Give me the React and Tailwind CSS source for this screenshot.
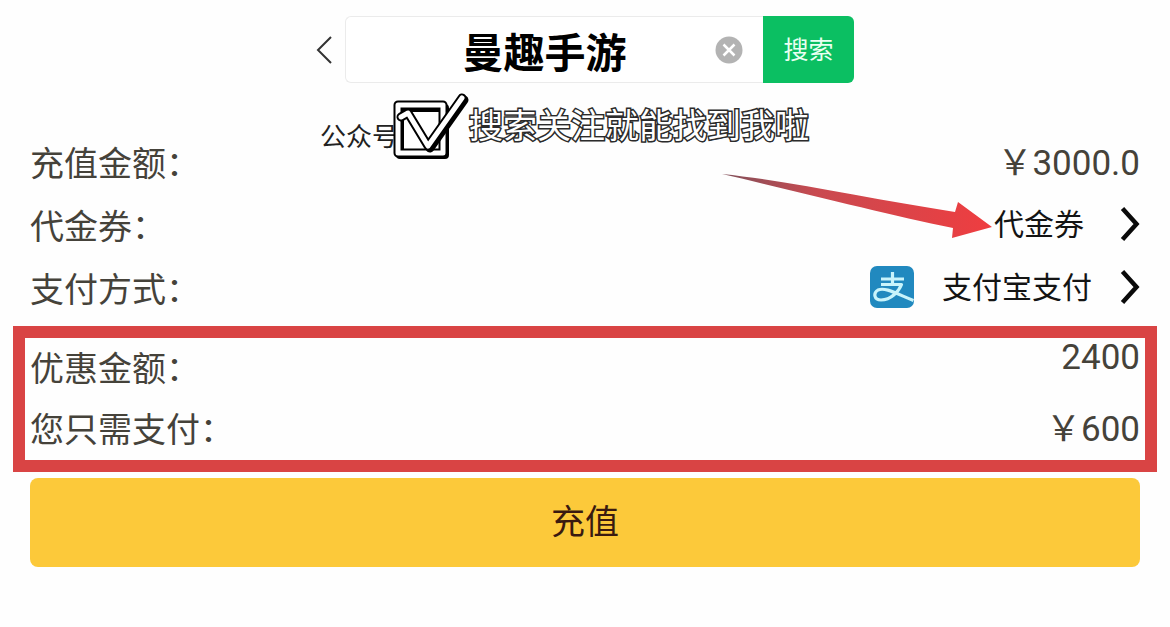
const Chevron = () => (
  <svg className="w-5 h-9" viewBox="0 0 20 36" fill="none" aria-hidden="true">
    <path d="M2.500 2.500 L16.500 18 L2.500 33.500" stroke="#0a0a0a" strokeWidth="4.5" />
  </svg>
);

const AlipayLogo = () => (
  <svg className="w-11 h-[42px]" viewBox="0 0 44 42" fill="none" aria-hidden="true">
    <rect width="44" height="42" rx="7" fill="#2189bf" />
    <path
      d="M11 13 H34 M22.500 6 V18.500 M11 18.500 H31.500 C29 25 21 34 11 34 C4 34 3 27 8 24 C15 21 25 27 43.500 34.500"
      stroke="#c9f4fb"
      strokeWidth="3.2"
      strokeLinejoin="round"
    />
  </svg>
);

const CheckMark = () => (
  <svg
    className="w-[75px] h-16 -ml-1 shrink-0 overflow-visible"
    viewBox="0 0 75 64"
    fill="none"
    strokeLinejoin="round"
    strokeLinecap="round"
    aria-hidden="true"
  >
    {/* box with its drop shadow */}
    <rect x="4" y="10" width="45" height="48" fill="#fff" />
    <rect x="6" y="13" width="45" height="47" stroke="#000" strokeWidth="8" />
    <rect x="4" y="10" width="45" height="48" stroke="#000" strokeWidth="9" />
    <rect x="4" y="10" width="45" height="48" stroke="#fff" strokeWidth="5" />
    {/* tick */}
    <path d="M36 53 L70 5" stroke="#000" strokeWidth="9" />
    <path d="M7 22 L14 18 L34 51 L68 3" stroke="#000" strokeWidth="9" />
    <path d="M7 22 L14 18 L34 51 L68 3" stroke="#fff" strokeWidth="5" />
  </svg>
);

const Arrow = () => (
  <svg
    className="absolute right-full -top-6 w-[274px] h-[72px] pointer-events-none"
    viewBox="0 0 274 72"
    aria-hidden="true"
  >
    <defs>
      <linearGradient id="arrow" x1="0" x2="1" y1="0" y2="0">
        <stop offset="0" stopColor="#80505a" />
        <stop offset="0.35" stopColor="#c94a50" />
        <stop offset="1" stopColor="#ef3d40" />
      </linearGradient>
    </defs>
    <path
      d="M2 3 C70 10 150 28 235 41 L238 31 L272 56 L232 67 L233 57 C165 43 80 21 2 3 Z"
      fill="url(#arrow)"
    />
  </svg>
);

const Row = ({ label, children, className = "h-[63px]" }) => (
  <div className={`flex items-center justify-between ${className}`}>
    <span className="pb-1 text-[34px] leading-10 text-[#45423a]">{label}</span>
    {children}
  </div>
);

const amount = "font-['Roboto','Noto_Sans_CJK_SC',sans-serif] text-[35px] leading-10 text-[#45423a]";
const picker = "relative flex items-center h-full pb-1.5 text-[30px] leading-10 text-[#141414] cursor-pointer";

const App = () => {
  return (
    <main className="min-h-screen bg-[#fefefe] pt-4 font-['Noto_Sans_CJK_SC',sans-serif]">
      <form className="flex items-center w-full max-w-[538px] mx-auto" onSubmit={(e) => e.preventDefault()}>
        <button type="button" aria-label="返回" className="w-[29px] shrink-0 cursor-pointer">
          <svg className="w-4 h-7" viewBox="0 0 16 28" fill="none">
            <path d="M15 1 L2 14 L15 27" stroke="#333" strokeWidth="2" />
          </svg>
        </button>
        <div className="flex flex-1 min-w-0 items-center h-[67px] pr-5 border border-r-0 border-[#ebebeb] rounded-l-md bg-white">
          <input
            type="text"
            aria-label="搜索"
            defaultValue="曼趣手游"
            className="flex-1 min-w-0 h-full pl-7 text-center text-[41px] font-bold text-black outline-none"
          />
          <button type="button" aria-label="清除" className="shrink-0 cursor-pointer">
            <svg className="w-7 h-7" viewBox="0 0 28 28" fill="none">
              <circle cx="14" cy="14" r="13.5" fill="#b3b3b3" />
              <path d="M8.500 8.500 L19.500 19.500 M19.500 8.500 L8.500 19.500" stroke="#fff" strokeWidth="2.5" />
            </svg>
          </button>
        </div>
        <button type="submit" className="w-[91px] h-[67px] pb-0.5 shrink-0 rounded-r-md bg-[#0bbf62] text-[25px] text-[#e9fff1] cursor-pointer">
          搜索
        </button>
      </form>

      <div className="flex items-center w-full max-w-[538px] h-16 mt-3 mx-auto pl-1 whitespace-nowrap">
        <span className="self-end pb-1 text-[26px] leading-10 text-[#222]">公众号</span>
        <CheckMark />
        <span className="pb-1.5 text-[34px] leading-10 text-white [-webkit-text-stroke:3px_#2b2b2b] [paint-order:stroke_fill] [text-shadow:1px_1px_0_#2b2b2b]">
          搜索关注就能找到我啦
        </span>
      </div>

      <section className="-mt-[27px] px-[30px]">
        <Row label="充值金额：">
          <span className={amount}>￥3000.0</span>
        </Row>
        <Row label="代金券：">
          <button type="button" className={`${picker} gap-9`}>
            <Arrow />
            <span className="pb-1">代金券</span>
            <Chevron />
          </button>
        </Row>
        <Row label="支付方式：">
          <button type="button" className={`${picker} gap-7`}>
            <AlipayLogo />
            <span className="pb-1">支付宝支付</span>
            <Chevron />
          </button>
        </Row>
      </section>

      <section className="mt-[5px] mx-[13px] px-[5px] border-12 border-[#d94444]">
        <Row label="优惠金额：" className="h-[61px]">
          <span className={`${amount} self-start`}>2400</span>
        </Row>
        <Row label="您只需支付：" className="h-[61px]">
          <span className={amount}>￥600</span>
        </Row>
      </section>

      <div className="px-[30px] mt-1.5">
        <button type="button" className="w-full h-[89px] pb-1.5 rounded-lg bg-[#fcc93a] text-[34px] text-[#3a1a10] cursor-pointer">
          充值
        </button>
      </div>
    </main>
  );
};

export default App;
